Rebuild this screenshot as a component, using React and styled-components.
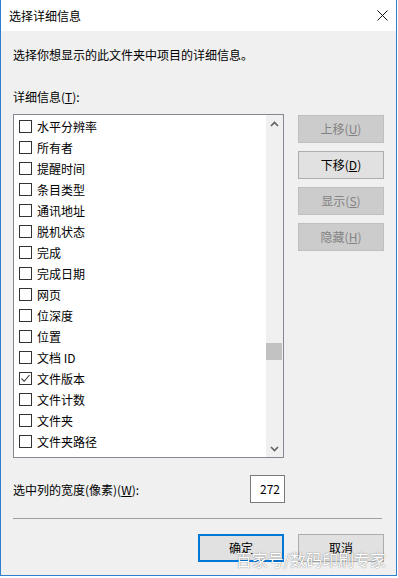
import React from 'react';
import styled, { createGlobalStyle } from 'styled-components';

const GlobalStyle = createGlobalStyle`
  html, body {
    margin: 0;
    padding: 0;
    background: #fff;
  }
  body {
    font-family: "Noto Sans CJK SC", "Noto Sans", sans-serif;
    font-size: 12px;
    color: #000;
  }
`;

const Window = styled.div`
  position: relative;
  width: 397px;
  height: 576px;
  box-sizing: border-box;
  border: 1px solid #2f7fcf;
  border-top: none;
  background: #f0f0f0;
  display: flex;
  flex-direction: column;
  overflow: hidden;
`;

const TitleBar = styled.div`
  height: 31px;
  flex-shrink: 0;
  background: #fff;
  display: flex;
  align-items: center;
  justify-content: space-between;
  padding-left: 8px;
`;

const Title = styled.span`
  line-height: 16px;
`;

const CloseButton = styled.div`
  width: 28px;
  height: 31px;
  display: flex;
  align-items: center;
  justify-content: center;
`;

const Body = styled.div`
  flex: 1;
  display: flex;
  flex-direction: column;
  padding: 0 12px 13px 12px;
`;

const Text = styled.div`
  line-height: 16px;
  margin-top: ${(p) => p.$top}px;
`;

const MainRow = styled.div`
  display: flex;
  gap: 14px;
  margin-top: 9px;
`;

const ListBox = styled.div`
  width: 271px;
  height: 344px;
  box-sizing: border-box;
  border: 1px solid #828790;
  background: #fff;
  display: flex;
`;

const ItemList = styled.div`
  flex: 1;
  padding-top: 1px;
  overflow: hidden;
`;

const Item = styled.div`
  height: 21px;
  display: flex;
  align-items: center;
  gap: 5px;
  padding-left: 5px;
  line-height: 16px;
  white-space: nowrap;
`;

const Check = styled.span`
  width: 13px;
  height: 13px;
  box-sizing: border-box;
  border: 1px solid #333;
  background: #fff;
  display: flex;
  align-items: center;
  justify-content: center;
  flex-shrink: 0;
`;

const ScrollBar = styled.div`
  width: 17px;
  background: #f0f0f0;
  display: flex;
  flex-direction: column;
`;

const ScrollArrow = styled.div`
  height: 17px;
  display: flex;
  align-items: center;
  justify-content: center;
  flex-shrink: 0;
`;

const Track = styled.div`
  flex: 1;
  display: flex;
  flex-direction: column;
`;

const Thumb = styled.div`
  height: 17px;
  margin: 0 1px 0 0;
  background: #c2c2c2;
`;

const ButtonColumn = styled.div`
  display: flex;
  flex-direction: column;
  gap: 8px;
  margin-top: 1px;
`;

const Button = styled.div`
  width: 86px;
  height: 28px;
  box-sizing: border-box;
  display: flex;
  align-items: center;
  justify-content: center;
  line-height: 14px;
  background: ${(p) => (p.$disabled ? '#cccccc' : '#e1e1e1')};
  border: ${(p) => (p.$primary ? '2px solid #0078d7' : `1px solid ${p.$disabled ? '#bfbfbf' : '#adadad'}`)};
  color: ${(p) => (p.$disabled ? '#838383' : '#000')};
`;

const WidthRow = styled.div`
  width: 272px;
  margin-top: 17px;
  display: flex;
  align-items: center;
  justify-content: space-between;
`;

const NumberBox = styled.div`
  width: 35px;
  height: 28px;
  box-sizing: border-box;
  border: 1px solid #7a7a7a;
  background: #fff;
  text-align: right;
  padding-right: 4px;
  line-height: 25px;
`;

const Separator = styled.div`
  height: 1px;
  margin: 15px 2px 0 0;
  background: #a0a0a0;
`;

const Footer = styled.div`
  margin-top: 15px;
  display: flex;
  justify-content: flex-end;
  gap: 14px;
`;

const Watermark = styled.div`
  position: absolute;
  right: 10px;
  bottom: 9px;
  font-size: 16px;
  line-height: 14px;
  color: #fff;
  text-shadow: 0 0 1px rgba(0, 0, 0, 0.45), 0 0 2px rgba(0, 0, 0, 0.2);
`;

const items = [
  ['水平分辨率', false],
  ['所有者', false],
  ['提醒时间', false],
  ['条目类型', false],
  ['通讯地址', false],
  ['脱机状态', false],
  ['完成', false],
  ['完成日期', false],
  ['网页', false],
  ['位深度', false],
  ['位置', false],
  ['文档 ID', false],
  ['文件版本', true],
  ['文件计数', false],
  ['文件夹', false],
  ['文件夹路径', false],
];

const Chevron = ({ up }) => (
  <svg width="9" height="6" viewBox="0 0 9 6">
    <path
      d={up ? 'M1 5 L4.5 1.5 L8 5' : 'M1 1 L4.5 4.5 L8 1'}
      fill="none"
      stroke="#606060"
      strokeWidth="1.6"
    />
  </svg>
);

const App = () => {
  // scroll position of the list, as an offset within the track
  const thumbOffset = 211;
  return (
    <>
      <GlobalStyle />
      <Window>
        <TitleBar>
          <Title>选择详细信息</Title>
          <CloseButton>
            <svg width="11" height="11" viewBox="0 0 11 11">
              <path d="M0.5 0.5 L10.5 10.5 M10.5 0.5 L0.5 10.5" stroke="#111" strokeWidth="1" />
            </svg>
          </CloseButton>
        </TitleBar>
        <Body>
          <Text $top={16}>选择你想显示的此文件夹中项目的详细信息。</Text>
          <Text $top={26}>
            详细信息(<u>T</u>):
          </Text>
          <MainRow>
            <ListBox>
              <ItemList>
                {items.map(([name, checked]) => (
                  <Item key={name}>
                    <Check>
                      {checked && (
                        <svg width="11" height="11" viewBox="0 0 11 11">
                          <path d="M1.5 5.5 L4.2 8.3 L9.5 2" fill="none" stroke="#333" strokeWidth="1.1" />
                        </svg>
                      )}
                    </Check>
                    {name}
                  </Item>
                ))}
              </ItemList>
              <ScrollBar>
                <ScrollArrow>
                  <Chevron up />
                </ScrollArrow>
                <Track>
                  <Thumb style={{ marginTop: thumbOffset }} />
                </Track>
                <ScrollArrow>
                  <Chevron />
                </ScrollArrow>
              </ScrollBar>
            </ListBox>
            <ButtonColumn>
              <Button $disabled>
                上移(<u>U</u>)
              </Button>
              <Button>
                下移(<u>D</u>)
              </Button>
              <Button $disabled>
                显示(<u>S</u>)
              </Button>
              <Button $disabled>
                隐藏(<u>H</u>)
              </Button>
            </ButtonColumn>
          </MainRow>
          <WidthRow>
            <span>
              选中列的宽度(像素)(<u>W</u>):
            </span>
            <NumberBox>272</NumberBox>
          </WidthRow>
          <Separator />
          <Footer>
            <Button $primary>确定</Button>
            <Button>取消</Button>
          </Footer>
        </Body>
        <Watermark>百家号/数码印刷专家</Watermark>
      </Window>
    </>
  );
};

export default App;
